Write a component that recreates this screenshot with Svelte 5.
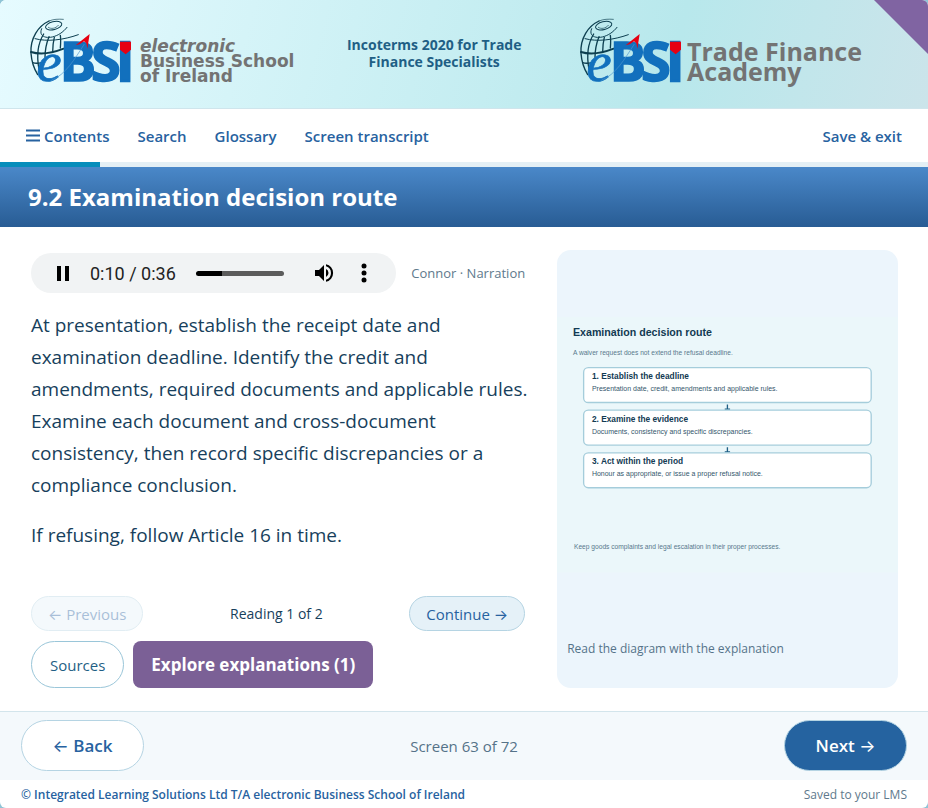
<script lang="ts">
	type Step = { title: string; detail: string };

	const courseTitle = 'Incoterms 2020 for Trade Finance Specialists';
	const screenTitle = '9.2 Examination decision route';
	const screenCount = 72;
	const screenNumber = 63;
	const progress = 10.8;

	const navItems = ['Search', 'Glossary', 'Screen transcript'];

	const paragraphs = [
		'At presentation, establish the receipt date and examination deadline. Identify the credit and amendments, required documents and applicable rules. Examine each document and cross-document consistency, then record specific discrepancies or a compliance conclusion.',
		'If refusing, follow Article 16 in time.'
	];

	const steps: Step[] = [
		{
			title: '1. Establish the deadline',
			detail: 'Presentation date, credit, amendments and applicable rules.'
		},
		{
			title: '2. Examine the evidence',
			detail: 'Documents, consistency and specific discrepancies.'
		},
		{
			title: '3. Act within the period',
			detail: 'Honour as appropriate, or issue a proper refusal notice.'
		}
	];

	const duration = 36;
	let position = $state(10);
	let playing = $state(true);

	function formatTime(seconds: number): string {
		return `${Math.floor(seconds / 60)}:${String(seconds % 60).padStart(2, '0')}`;
	}
</script>

{#snippet emblem()}
	<svg class="emblem" viewBox="15 15 303 201" role="img" aria-label="eBSI">
		<g fill="none" stroke="#0d3f50" stroke-linecap="round">
			<path d="M72 27C40 42 15 78 18 124c2 28 9 46 20 64" stroke-width="4" />
			<path d="M72 27C86 21 100 21 115 22" stroke-width="2" />
			<ellipse cx="86" cy="41" rx="25" ry="12" transform="rotate(-14 86 41)" stroke-width="3" />
			<path d="M70 46c8 6 22 4 30-6" stroke-width="2" />
			<path d="M50 50c-16 34 44 38 76-4" stroke-width="3" />
			<path d="M30 80c36 10 86 4 130-12" stroke-width="3" />
			<path d="M18 120c26 8 62 4 98-10" stroke-width="6" />
			<path d="M23 152c10 3 18 2 27 0" stroke-width="4" />
			<path d="M56 66C40 92 34 130 42 172" stroke-width="4" />
			<path d="M72 74c-8 20-12 40-12 62" stroke-width="4" />
			<path d="M88 76c-4 16-5 30-5 44" stroke-width="4" />
			<path d="M106 70c2 12 1 24 0 38" stroke-width="4" />
		</g>
		<text class="emblem-e" x="34" y="208">e</text>
		<text class="emblem-b" x="104" y="207">B</text>
		<text class="emblem-b" x="198" y="207">S</text>
		<text class="emblem-i" x="274" y="206">I</text>
		<path d="M285 89h33v24l-16 14-17-14z" fill="#e60012" />
		<path d="M194 66l-42 34 12-3 13-9 7 6 3 16z" fill="#e60012" />
		<path d="M80 204C120 190 150 140 178 96" fill="none" stroke="#4a94cf" stroke-width="2" />
	</svg>
{/snippet}

<div class="player">
	<header class="banner">
		<div class="brand">
			{@render emblem()}
			<div class="school"><em>electronic</em><br />Business School<br />of Ireland</div>
		</div>
		<p class="course">{courseTitle}</p>
		<div class="brand academy-brand">
			{@render emblem()}
			<div class="academy">Trade Finance<br />Academy</div>
		</div>
		<span class="ribbon"></span>
	</header>

	<nav class="toolbar">
		<button class="contents">
			<svg width="14" height="13" viewBox="0 0 14 13" aria-hidden="true">
				<path d="M0 1.5h14M0 6.5h14M0 11.5h14" stroke="currentColor" stroke-width="2" />
			</svg>
			Contents
		</button>
		{#each navItems as item (item)}
			<button>{item}</button>
		{/each}
		<button class="exit">Save &amp; exit</button>
	</nav>

	<div class="progress"><div class="progress-fill" style="width: {progress}%"></div></div>

	<h1>{screenTitle}</h1>

	<main>
		<section class="lesson">
			<div class="narration">
				<div class="audio">
					<button
						class="audio-button"
						aria-label={playing ? 'Pause' : 'Play'}
						onclick={() => (playing = !playing)}
					>
						<svg width="24" height="24" viewBox="0 0 24 24">
							{#if playing}
								<path d="M6 5h4v15H6zM14 5h4v15h-4z" />
							{:else}
								<path d="M8 5v14l11-7z" />
							{/if}
						</svg>
					</button>
					<span class="time">{formatTime(position)} / {formatTime(duration)}</span>
					<input
						type="range"
						aria-label="Seek"
						min="0"
						max={duration}
						bind:value={position}
						style="--played: {((position + 0.8) / duration) * 100}%"
					/>
					<button class="audio-button" aria-label="Mute">
						<svg width="24" height="24" viewBox="0 0 24 24">
							<path
								d="M3 9v6h4l5 5V4L7 9zm13.500 3A4.500 4.500 0 0 0 14 8v8a4.500 4.500 0 0 0 2.500-4zM14 3.200v2.100a7 7 0 0 1 0 13.400v2.100a9 9 0 0 0 0-17.600z"
							/>
						</svg>
					</button>
					<button class="audio-button" aria-label="More options">
						<svg width="24" height="24" viewBox="0 0 24 24">
							<circle cx="12" cy="5" r="2.500" />
							<circle cx="12" cy="12" r="2.500" />
							<circle cx="12" cy="19" r="2.500" />
						</svg>
					</button>
				</div>
				<span class="voice">Connor · Narration</span>
			</div>

			<div class="reading">
				{#each paragraphs as paragraph}
					<p>{paragraph}</p>
				{/each}
			</div>

			<div class="pager">
				<button class="pill" disabled><span class="arrow">←</span> Previous</button>
				<span>Reading 1 of 2</span>
				<button class="pill">Continue <span class="arrow">→</span></button>
			</div>
			<div class="extras">
				<button class="sources">Sources</button>
				<button class="explore">Explore explanations (1)</button>
			</div>
		</section>

		<figure>
			<svg class="diagram" viewBox="0 0 1024 768" role="img" aria-label="Examination decision route">
				<rect width="1024" height="768" fill="#ebf7fa" />
				<text class="d-title" x="48" y="57">Examination decision route</text>
				<text class="d-note" x="48" y="114">A waiver request does not extend the refusal deadline.</text>
				{#each steps as step, i}
					<g transform="translate(80 {152 + i * 128})">
						<rect class="d-box" width="864" height="105" rx="14" />
						<text class="d-step" x="25" y="34">{step.title}</text>
						<text class="d-detail" x="25" y="71">{step.detail}</text>
						{#if i < steps.length - 1}
							<path d="M432 111v15M424 125h16" stroke="#1f5f85" stroke-width="4" />
						{/if}
					</g>
				{/each}
				<text class="d-note" x="51" y="696">
					Keep goods complaints and legal escalation in their proper processes.
				</text>
			</svg>
			<figcaption>Read the diagram with the explanation</figcaption>
		</figure>
	</main>

	<div class="stepper">
		<button class="step-button"><span class="arrow">←</span> Back</button>
		<span>Screen {screenNumber} of {screenCount}</span>
		<button class="step-button next">Next <span class="arrow">→</span></button>
	</div>

	<footer>
		<strong>© Integrated Learning Solutions Ltd T/A electronic Business School of Ireland</strong>
		<span>Saved to your LMS</span>
	</footer>
</div>

<style>
	:global(body) {
		margin: 0;
		background: #8fc4d6;
	}

	.player {
		display: flex;
		flex-direction: column;
		min-height: 100vh;
		border-radius: 6px;
		overflow: hidden;
		background: #fff;
		color: #173f5c;
		font-family: 'Open Sans', 'Liberation Sans', sans-serif;
	}

	button {
		margin: 0;
		font-family: inherit;
		cursor: pointer;
	}

	.arrow {
		font-family: Inter, sans-serif;
		font-weight: 400;
	}

	.banner {
		position: relative;
		display: flex;
		align-items: flex-start;
		justify-content: space-between;
		box-sizing: border-box;
		min-height: 109px;
		padding: 17px 66px 24px 30px;
		border-bottom: 1px solid #cfe5ec;
		background: linear-gradient(105deg, #e6fbff, #b8e8ec 72%, #cbe4ea);
	}

	.brand {
		display: flex;
		align-items: flex-end;
		flex-shrink: 0;
		gap: 9px;
		color: #737373;
		font-weight: bold;
	}

	.academy-brand {
		align-items: center;
		gap: 6px;
	}

	.emblem {
		display: block;
		width: 101px;
		height: 67px;
		overflow: visible;
	}

	.emblem-e {
		fill: #1270bd;
		stroke: #1270bd;
		stroke-width: 2;
		font: italic 172px 'Liberation Serif', serif;
	}

	.emblem-b,
	.emblem-i {
		fill: #1270bd;
		stroke: #1270bd;
		stroke-width: 5;
		font: bold 162px 'Open Sans', sans-serif;
	}

	.emblem-i {
		stroke-width: 7;
	}

	.school {
		font-family: 'DejaVu Sans', sans-serif;
		font-size: 17px;
		line-height: 15px;
	}

	.academy {
		padding-top: 20px;
		font-size: 25px;
		line-height: 20px;
	}

	.course {
		max-width: 190px;
		margin: 19px 6px 0 0;
		color: #1f5f85;
		font-size: 14px;
		font-weight: bold;
		line-height: 17px;
		text-align: center;
	}

	.ribbon {
		position: absolute;
		top: 0;
		right: 0;
		width: 54px;
		height: 54px;
		background: #8064a2;
		clip-path: polygon(0 0, 100% 0, 100% 100%);
	}

	.toolbar {
		display: flex;
		align-items: center;
		gap: 28px;
		height: 53px;
		padding: 0 26px;
	}

	.toolbar button {
		padding: 0;
		border: 0;
		background: none;
		color: #2762a0;
		font-size: 15px;
		font-weight: 600;
	}

	.toolbar .contents {
		display: flex;
		align-items: center;
		gap: 4px;
	}

	.toolbar .exit {
		margin-left: auto;
	}

	.progress {
		height: 5px;
		background: #e4eff5;
	}

	.progress-fill {
		height: 100%;
		background: #078dbb;
	}

	h1 {
		margin: 0;
		padding: 0 28px;
		background: linear-gradient(#4a88c9, #285c94);
		color: #fff;
		font-size: 24px;
		line-height: 60px;
	}

	main {
		flex: 1;
		display: grid;
		grid-template-columns: 145fr 100fr;
		gap: 32px;
		padding: 23px 30px 23px 31px;
	}

	.lesson {
		display: flex;
		flex-direction: column;
		min-width: 0;
	}

	.narration {
		display: flex;
		align-items: center;
		gap: 15px;
		padding-top: 3px;
	}

	.audio {
		flex: 1;
		display: flex;
		align-items: center;
		min-width: 0;
		height: 40px;
		padding: 0 12px;
		box-sizing: border-box;
		border-radius: 20px;
		background: #f1f3f4;
	}

	.audio-button {
		flex-shrink: 0;
		width: 40px;
		height: 40px;
		padding: 8px;
		border: 0;
		background: none;
	}

	.audio-button svg {
		display: block;
	}

	.time {
		margin: 0 20px 0 7px;
		color: #222;
		font-family: Roboto, sans-serif;
		font-size: 18px;
		white-space: nowrap;
	}

	input[type='range'] {
		flex: 1;
		width: 0;
		min-width: 0;
		height: 5px;
		margin: 0 20px 0 0;
		border-radius: 3px;
		background: linear-gradient(90deg, #000 var(--played), #5c5c5c var(--played));
		appearance: none;
	}

	input[type='range']::-webkit-slider-thumb {
		width: 0;
		height: 0;
		appearance: none;
	}

	.voice {
		color: #60798c;
		font-size: 13px;
		white-space: nowrap;
	}

	.reading {
		flex: 1;
		margin-right: -8px;
		padding-top: 16px;
		font-size: 19px;
		line-height: 32px;
	}

	.reading p {
		margin: 0 0 18px;
	}

	.pager {
		display: flex;
		align-items: center;
		justify-content: space-between;
		font-size: 14px;
	}

	.pill {
		height: 35px;
		padding: 0 16px;
		border: 1px solid #b5d4e3;
		border-radius: 18px;
		background: #e5f1f8;
		color: #2762a0;
		font-size: 15px;
	}

	.pill:disabled {
		opacity: 0.4;
		cursor: default;
	}

	.extras {
		display: flex;
		gap: 9px;
		margin-top: 10px;
	}

	.extras button {
		height: 47px;
	}

	.sources {
		padding: 0 18px;
		border: 1px solid #9ac6d9;
		border-radius: 24px;
		background: #fff;
		color: #1f5f85;
		font-size: 15px;
	}

	.explore {
		padding: 0 18px;
		border: 0;
		border-radius: 8px;
		background: #7b6096;
		color: #fff;
		font-size: 17px;
		font-weight: bold;
	}

	figure {
		display: flex;
		flex-direction: column;
		justify-content: flex-end;
		min-width: 0;
		margin: 0;
		padding-bottom: 29px;
		border-radius: 14px;
		background: #ecf5fc;
	}

	.diagram {
		display: block;
		width: 100%;
		font-family: 'Liberation Sans', sans-serif;
	}

	.d-title {
		fill: #123a52;
		font-size: 32px;
		font-weight: bold;
	}

	.d-note {
		fill: #58788c;
		font-size: 20px;
	}

	.d-box {
		fill: #fff;
		stroke: #a5cddb;
		stroke-width: 4;
	}

	.d-step {
		fill: #123a52;
		font-size: 25px;
		font-weight: bold;
	}

	.d-detail {
		fill: #34566c;
		font-size: 21px;
	}

	figcaption {
		padding: 66px 10px 0;
		color: #557389;
		font-size: 12px;
		line-height: 20px;
	}

	.stepper {
		display: grid;
		grid-template-columns: 1fr auto 1fr;
		align-items: center;
		padding: 8px 21px 9px;
		border-top: 1px solid #d3e5ec;
		background: #f4f9fc;
		color: #557389;
		font-size: 15px;
	}

	.step-button {
		justify-self: start;
		min-width: 123px;
		height: 51px;
		padding: 0 28px;
		border: 1px solid #b5d4e3;
		border-radius: 26px;
		background: #fff;
		color: #2762a0;
		font-size: 17px;
		font-weight: 600;
	}

	.next {
		justify-self: end;
		background: #2563a0;
		color: #fff;
	}

	footer {
		display: flex;
		align-items: center;
		justify-content: space-between;
		height: 28px;
		padding: 0 21px;
		color: #60798c;
		font-size: 12px;
	}

	footer strong {
		color: #2762a0;
		font-weight: 600;
	}
</style>
